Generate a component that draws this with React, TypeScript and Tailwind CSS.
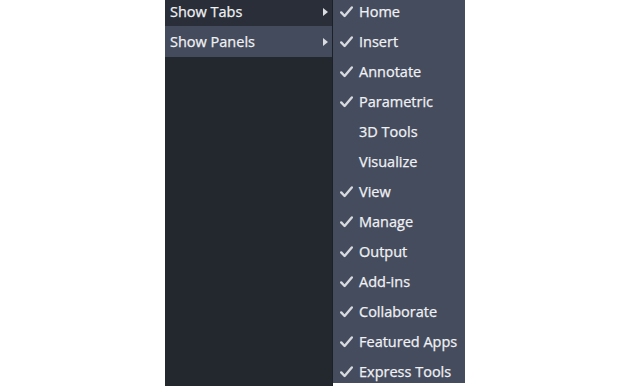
const panels = [
  { label: "Home", checked: true },
  { label: "Insert", checked: true },
  { label: "Annotate", checked: true },
  { label: "Parametric", checked: true },
  { label: "3D Tools", checked: false },
  { label: "Visualize", checked: false },
  { label: "View", checked: true },
  { label: "Manage", checked: true },
  { label: "Output", checked: true },
  { label: "Add-ins", checked: true },
  { label: "Collaborate", checked: true },
  { label: "Featured Apps", checked: true },
  { label: "Express Tools", checked: true },
];

function Check() {
  return (
    <svg width="13" height="12" viewBox="0 0 13 12" className="shrink-0">
      <path d="M1.2 6.4 L4.6 10 L11.8 1.4" fill="none" stroke="#d6d9de" strokeWidth="2.4" strokeLinecap="round" strokeLinejoin="round" />
    </svg>
  );
}

function Arrow() {
  return (
    <svg width="5" height="8" viewBox="0 0 5 8" className="shrink-0">
      <path d="M0 0 L5 4 L0 8 Z" fill="#d9dce1" />
    </svg>
  );
}

export default function App() {
  return (
    <div
      className="w-[629px] h-[386px] bg-white overflow-hidden flex"
      style={{ fontFamily: '"Open Sans", "Noto Sans", sans-serif' }}
    >
      <div className="ml-[165px] w-[167px] h-full bg-[#23282f] flex flex-col">
        <div className="-mt-[4px] h-[30px] bg-[#292e38] flex items-center justify-between pl-[5px] pr-[4px] pt-[2px]">
          <span className="text-[14.5px] text-[#f0f1f4] [-webkit-text-stroke:0.25px_#f0f1f4]">Show Tabs</span>
          <Arrow />
        </div>
        <div className="h-[31px] bg-[#444b5d] flex items-center justify-between pl-[5px] pr-[4px]">
          <span className="text-[14.5px] text-[#f0f1f4] [-webkit-text-stroke:0.25px_#f0f1f4]">Show Panels</span>
          <Arrow />
        </div>
      </div>
      <div className="w-[1px] h-full bg-[#1c2027]" />
      <div className="w-[132px] h-full bg-[#454c5e] flex flex-col -mt-[3px]">
        {panels.map((p) => (
          <div key={p.label} className="h-[30px] shrink-0 flex items-center pl-[7px] gap-[6px]">
            <div className="w-[13px] flex justify-center">{p.checked && <Check />}</div>
            <span className="text-[14.5px] text-[#f0f1f4] [-webkit-text-stroke:0.25px_#f0f1f4]">{p.label}</span>
          </div>
        ))}
      </div>
    </div>
  );
}
